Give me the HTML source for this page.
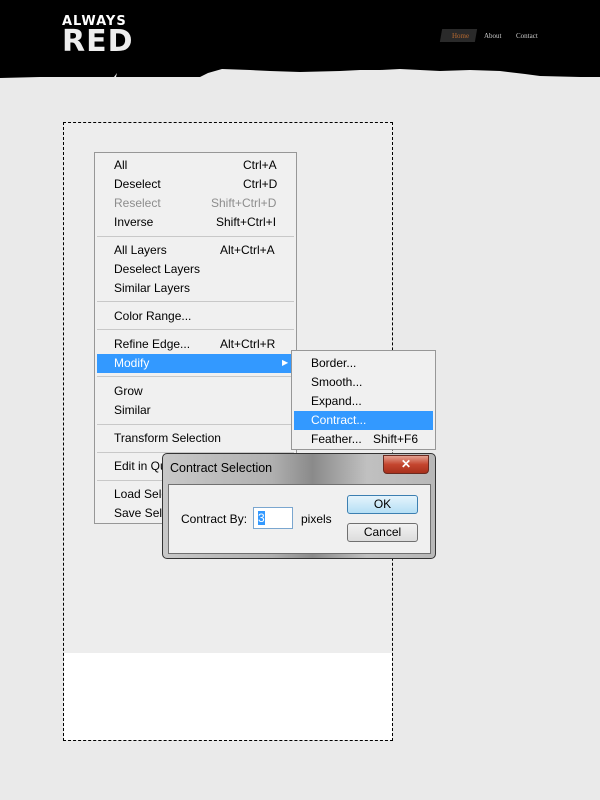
<!DOCTYPE html>
<html><head><style>
*{margin:0;padding:0;box-sizing:border-box}
body{width:600px;height:800px;background:#eaeaea;position:relative;overflow:hidden;font-family:"Liberation Sans",sans-serif}
.hdr{position:absolute;left:0;top:0;width:600px;height:90px}
.nav{position:absolute;top:32px;font-family:"Liberation Serif",serif;font-size:7px;color:#ccc}
.ab{position:absolute}
.menu{left:94px;top:152px;width:203px;height:372px;background:#f0f0f0;border:1px solid #979797;font-size:12px;color:#000}
.it{position:absolute;left:19px;height:19px;line-height:19px;white-space:nowrap}
.sc{position:absolute;height:19px;line-height:19px}
.sep{position:absolute;left:2px;right:2px;height:1px;background:#c8c8c8}
.hl{position:absolute;background:#3399ff}
</style></head><body>
<svg class="hdr" viewBox="0 0 600 90" width="600" height="90"><path d="M0 0H600V77L580 77 540 76 525 74 500 71 470 70 440 71 420 70 400 69 380 70 360 70 340 71 300 72 270 71 250 70 222 69 208 73 200 77 160 77 133 77 116 77 117 73 114 77 60 77 40 77 0 78Z" fill="#000"/></svg>
<div class="ab" style="left:62px;top:14px;color:#fff;font-weight:bold;font-size:13px;letter-spacing:1px;font-family:'DejaVu Sans',sans-serif">ALWAYS</div>
<div class="ab" style="left:62px;top:27px;color:#eee;font-weight:bold;font-size:30px;letter-spacing:1px;font-family:'DejaVu Sans',sans-serif;line-height:30px">RED</div>
<div class="ab" style="left:441px;top:29px;width:35px;height:13px;background:#2a2a2a;transform:skewX(-10deg)"></div>
<div class="nav" style="left:452px;color:#b86a30">Home</div>
<div class="nav" style="left:484px">About</div>
<div class="nav" style="left:516px">Contact</div>
<div class="ab" style="left:64px;top:123px;width:328px;height:530px;background:#ededed"></div>
<div class="ab" style="left:64px;top:653px;width:328px;height:87px;background:#fff"></div>
<div class="ab" style="left:63px;top:122px;width:330px;height:619px;border:1px dashed #000"></div>
<div class="ab menu">
<div class="hl" style="left:2px;top:201px;width:196px;height:19px"></div>
<div class="it" style="top:3px">All</div><div class="sc" style="top:3px;left:148px">Ctrl+A</div>
<div class="it" style="top:22px">Deselect</div><div class="sc" style="top:22px;left:148px">Ctrl+D</div>
<div class="it" style="top:41px;color:#8d8d8d">Reselect</div><div class="sc" style="top:41px;left:116px;color:#8d8d8d">Shift+Ctrl+D</div>
<div class="it" style="top:60px">Inverse</div><div class="sc" style="top:60px;left:121px">Shift+Ctrl+I</div>
<div class="sep" style="top:83px"></div>
<div class="it" style="top:88px">All Layers</div><div class="sc" style="top:88px;left:125px">Alt+Ctrl+A</div>
<div class="it" style="top:107px">Deselect Layers</div>
<div class="it" style="top:126px">Similar Layers</div>
<div class="sep" style="top:148px"></div>
<div class="it" style="top:154px">Color Range...</div>
<div class="sep" style="top:176px"></div>
<div class="it" style="top:182px">Refine Edge...</div><div class="sc" style="top:182px;left:125px">Alt+Ctrl+R</div>
<div class="it" style="top:201px;color:#fff">Modify</div><div class="sc" style="top:200px;left:187px;color:#fff;font-size:8px">&#9654;</div>
<div class="sep" style="top:223px"></div>
<div class="it" style="top:229px">Grow</div>
<div class="it" style="top:248px">Similar</div>
<div class="sep" style="top:271px"></div>
<div class="it" style="top:276px">Transform Selection</div>
<div class="sep" style="top:299px"></div>
<div class="it" style="top:304px">Edit in Quick Mask Mode</div>
<div class="sep" style="top:327px"></div>
<div class="it" style="top:332px">Load Selection...</div>
<div class="it" style="top:351px">Save Selection...</div>
</div>
<div class="ab menu" style="left:291px;top:350px;width:145px;height:100px">
<div class="hl" style="left:2px;top:60px;width:139px;height:19px"></div>
<div class="it" style="top:3px">Border...</div>
<div class="it" style="top:22px">Smooth...</div>
<div class="it" style="top:41px">Expand...</div>
<div class="it" style="top:60px;color:#fff">Contract...</div>
<div class="it" style="top:79px">Feather...</div><div class="sc" style="top:79px;left:81px">Shift+F6</div>
</div>
<div class="ab" style="left:162px;top:453px;width:274px;height:106px;border:1px solid #333;border-radius:5px;background:linear-gradient(90deg,#c8c8c8,#b0b0b0 40%,#8a8a8a 55%,#c0c0c0 75%,#b8b8b8);">
<div class="ab" style="left:7px;top:7px;font-size:12.5px;color:#000">Contract Selection</div>
<div class="ab" style="left:220px;top:1px;width:46px;height:19px;border-radius:0 0 4px 4px;border:1px solid #6a2a20;background:linear-gradient(#e4a090,#c4452e 50%,#a8301c);color:#fff;text-align:center;font-weight:bold;font-size:12px;line-height:17px">✕</div>
<div class="ab" style="left:5px;top:30px;width:263px;height:70px;background:#f0f0f0;border:1px solid #707070">
<div class="ab" style="left:12px;top:27px;font-size:12px">Contract By:</div>
<div class="ab" style="left:84px;top:22px;width:40px;height:22px;background:#fff;border:1px solid #7aa6cf"><span style="position:absolute;left:4px;top:3px;font-size:12px;background:#3399ff;color:#fff;line-height:14px">3</span></div>
<div class="ab" style="left:132px;top:27px;font-size:12px">pixels</div>
<div class="ab" style="left:178px;top:10px;width:71px;height:19px;border:1px solid #3c7fb1;border-radius:3px;background:linear-gradient(#e5f4fc,#b5dff5);font-size:12px;text-align:center;line-height:17px">OK</div>
<div class="ab" style="left:178px;top:38px;width:71px;height:19px;border:1px solid #707070;border-radius:3px;background:linear-gradient(#f2f2f2,#dcdcdc);font-size:12px;text-align:center;line-height:17px">Cancel</div>
</div></div>
</body></html>
